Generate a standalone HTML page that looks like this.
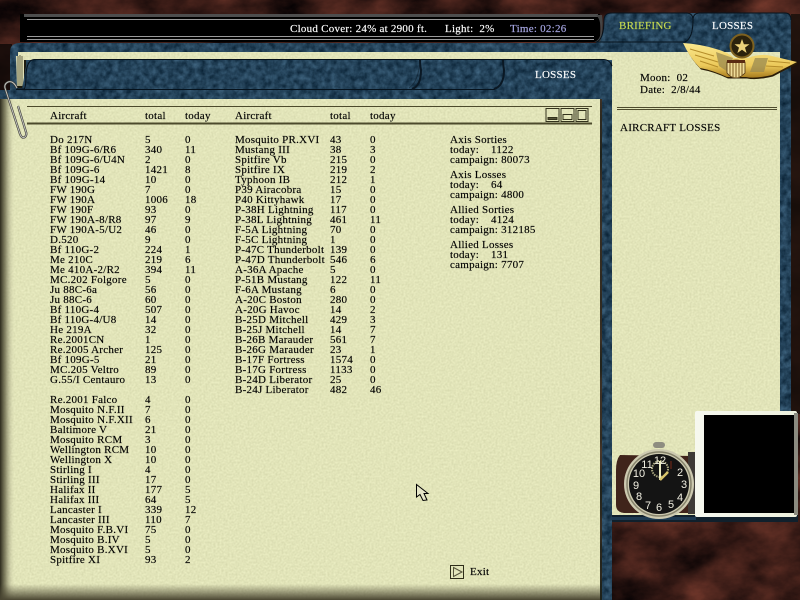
<!DOCTYPE html>
<html><head><meta charset="utf-8"><style>
html,body{margin:0;padding:0;width:800px;height:600px;overflow:hidden;background:#2a150f}
.t{position:absolute;font:11px/10px "Liberation Serif",serif;color:#000;white-space:pre;letter-spacing:.25px;-webkit-text-stroke:.15px currentColor}
svg{position:absolute;left:0;top:0}
</style></head><body>
<svg width="800" height="600" viewBox="0 0 800 600">
<defs>
<filter id="blue" x="0" y="0" width="100%" height="100%" color-interpolation-filters="sRGB">
<feTurbulence type="fractalNoise" baseFrequency="0.16" numOctaves="3" seed="4"/>
<feColorMatrix values="0.26 0 0 0 0.01  0.32 0 0 0 0.10  0.36 0 0 0 0.17  0 0 0 0 1"/>
<feComposite in2="SourceAlpha" operator="in"/>
</filter>
<filter id="brown" x="0" y="0" width="100%" height="100%" color-interpolation-filters="sRGB">
<feTurbulence type="fractalNoise" baseFrequency="0.016 0.026" numOctaves="7" seed="9"/>
<feColorMatrix values="0.62 0 0 0 -0.09  0.31 0 0 0 -0.05  0.23 0 0 0 -0.03  0 0 0 0 1"/>
<feComposite in2="SourceAlpha" operator="in"/>
</filter>
<filter id="paper" x="0" y="0" width="100%" height="100%" color-interpolation-filters="sRGB">
<feTurbulence type="fractalNoise" baseFrequency="0.5" numOctaves="2" seed="2"/>
<feColorMatrix values="0.12 0 0 0 0.825  0.12 0 0 0 0.835  0.12 0 0 0 0.665  0 0 0 0 1"/>
<feComposite in2="SourceAlpha" operator="in"/>
</filter>
<linearGradient id="lsh" x1="0" x2="1" y1="0" y2="0"><stop offset="0" stop-color="#2c2a1c"/><stop offset=".35" stop-color="#6e6c50" stop-opacity=".8"/><stop offset="1" stop-color="#e2e2bc" stop-opacity="0"/></linearGradient>
<linearGradient id="bsh" x1="0" x2="0" y1="0" y2="1"><stop offset="0" stop-color="#55513a" stop-opacity="0"/><stop offset="1" stop-color="#4a4632"/></linearGradient>
<linearGradient id="gold" x1="0" x2="0" y1="0" y2="1"><stop offset="0" stop-color="#fbe98e"/><stop offset=".65" stop-color="#ecc95a"/><stop offset="1" stop-color="#a87c1e"/></linearGradient>
<linearGradient id="mon" x1="0" x2="1" y1="0" y2="0"><stop offset="0" stop-color="#f6f8ef"/><stop offset="1" stop-color="#eef0dd"/></linearGradient>
</defs>
<rect width="800" height="600" fill="#000" filter="url(#brown)"/>
<rect x="0" y="44" width="12" height="46" fill="#0c0806" opacity=".8"/>
<rect x="791" y="14" width="9" height="400" fill="#1b100c" opacity=".85"/>
<path filter="url(#blue)" fill="#000" d="M10 52Q10 43 20 43H596Q604 40 604 20Q604 13 612 13H785Q791 13 791 20V412H780V52H612V600H602V99H0V90H10Z"/>
<rect x="612" y="52" width="168" height="465" fill="#000" filter="url(#paper)"/>
<rect x="612" y="515" width="186" height="7" fill="#10202c"/>
<rect x="612" y="517" width="84" height="3" fill="#1d3a52"/>
<rect x="18" y="52" width="594" height="8" fill="#000" filter="url(#paper)"/>
<path d="M16 56H22L25 60V88H17Z" fill="#e0dfb6"/>
<path d="M18 56V87M20 55V87M22 56V87" stroke="#4c4a30" stroke-width=".8" fill="none"/>
<path d="M24 60H26V88H16V86H24Z" fill="#1b1a10"/>
<path filter="url(#blue)" fill="#000" d="M25 72Q26 60 34 60H604Q612 60 612 68V99H16V89H22Z"/>
<path d="M17 89H24Q26 88 26 74Q27 60 34 59.500H604Q610 60 612 66" fill="none" stroke="#05101a" stroke-width="1"/>
<path d="M16 89.500H495" stroke="#06121c" stroke-width="1"/>
<path d="M420 60Q420 64 421 70Q421 86 412 89" fill="none" stroke="#0a1824" stroke-width="2"/>
<path d="M503 60Q503 64 504 70Q504 86 494 89" fill="none" stroke="#0a1824" stroke-width="2"/>
<path d="M420 62Q418 82 409 88" fill="none" stroke="#0a1824" stroke-width="1" opacity=".5"/>
<rect x="0" y="99" width="600" height="501" fill="#000" filter="url(#paper)"/>
<rect x="0" y="99" width="15" height="501" fill="url(#lsh)"/>
<rect x="0" y="584" width="600" height="16" fill="url(#bsh)"/>
<rect x="600" y="99" width="2" height="501" fill="#2e3a2c" opacity=".55"/>
<rect x="20" y="14" width="580" height="28" fill="#000"/>
<rect x="24" y="14" width="574" height="3" fill="#4e4e4e"/>
<path d="M27 19.500H594M27 36.500H594M27 39.500H594" stroke="#9a9a9a" stroke-width="1"/>
<path d="M596 15Q602 20 600 36Q598 41 594 42H600Q604 30 602 15Z" fill="#444"/>
<path d="M596 42Q604 40 604 20Q604 13 612 13H686Q693 13 693 20Q693 38 685 42Z" fill="none" stroke="#07131d" stroke-width="1"/>
<path d="M693 20Q693 13 700 13H785Q791 13 791 20" fill="none" stroke="#07131d" stroke-width="1"/>
<path d="M27 106.500H592" stroke="#4c4a2c" stroke-width="1"/>
<path d="M27 123.500H592" stroke="#4c4a2c" stroke-width="2"/>
<path d="M617 107.500H777M617 109.500H777" stroke="#4c4a2c" stroke-width="1"/>
<g fill="none" stroke="#33321c" stroke-width="1">
<rect x="546" y="108.500" width="13" height="13"/><rect x="561" y="108.500" width="13" height="13"/><rect x="576" y="108.500" width="12" height="13"/>
<rect x="548" y="117.500" width="9" height="2" fill="#555338"/><rect x="563" y="114.500" width="9" height="5"/><rect x="578" y="110.500" width="8" height="9"/>
</g>
<path d="M17 88Q13 80 8 82Q4 84 5 88L20 134Q22 139 25 137Q27 135 26 132L18 106" fill="none" stroke="#3a3a34" stroke-width="2.200"/>
<path d="M17 88Q13 80 8 82Q4 84 5 88L20 134Q22 139 25 137Q27 135 26 132L18 106" fill="none" stroke="#c4c4c0" stroke-width="1"/>
<path d="M683 43Q700 44 716 49Q728 52 734 58L748 58Q760 53 772 56L797 62Q785 68 772 75Q755 79 746 77L727 77Q712 70 700 68Q690 58 683 43Z" fill="#2a1c06" transform="translate(1,1.500)"/>
<path d="M683 43Q700 44 716 49Q728 52 734 58L748 58Q760 53 772 56L797 62Q785 68 772 75Q755 79 746 77L727 77Q712 70 700 68Q690 58 683 43Z" fill="url(#gold)"/>
<path d="M690 49L714 56M695 55L718 62M700 61L718 67M790 63L768 61M783 67L766 66" stroke="#b58d2a" stroke-width="1"/>
<path d="M716 52L733 58L728 72L719 66Z M755 58L768 58L764 72L750 72Z" fill="#9a8a50" opacity=".75"/>
<path d="M727 62Q736 58 745 62V73Q740 78 736 78Q731 78 727 73Z" fill="#efdc98" stroke="#4a3010" stroke-width=".8"/>
<rect x="727" y="60" width="18" height="3" fill="#5a2a12"/>
<path d="M730 63V76M733 63V78M736 63V78M739 63V78M742 63V76" stroke="#7c5a20" stroke-width="1"/>
<circle cx="742" cy="46" r="11.500" fill="#2b220c" stroke="#7d6120" stroke-width="2"/>
<path d="M742 39L743.900 44.300H749.500L745 47.600L746.600 53L742 49.800L737.400 53L739 47.600L734.500 44.300H740.100Z" fill="#ecd27a"/>
<rect x="695" y="411" width="102" height="106" rx="2" fill="url(#mon)"/>
<rect x="704" y="415" width="90" height="98" fill="#000"/>
<rect x="794" y="413" width="4" height="102" fill="#8b8b80"/>
<path d="M620 455Q616 460 616 470V505Q616 512 624 513H694V456Z" fill="#40241b"/>
<rect x="688" y="452" width="7" height="62" fill="#3e3a36"/>
<rect x="653" y="442" width="12" height="6" rx="3" fill="#8e8d80"/>
<circle cx="659" cy="484" r="35" fill="#cdcab0"/>
<circle cx="659" cy="484" r="32" fill="none" stroke="#86836c" stroke-width="1.500"/>
<circle cx="659" cy="484" r="30" fill="#141414"/>
<circle cx="660" cy="469" r="8" fill="none" stroke="#aaa77f" stroke-width="2" stroke-dasharray="1.500 1"/>
<g font-family="Liberation Sans,sans-serif" font-size="11" fill="#f2f0e2" text-anchor="middle">
<text x="660" y="464">12</text><text x="680" y="476">2</text><text x="684" y="488">3</text><text x="680" y="501">4</text><text x="671" y="508">5</text><text x="659" y="511">6</text><text x="648" y="509">7</text><text x="639" y="500">8</text><text x="636" y="489">9</text><text x="639" y="477">10</text><text x="647" y="468">11</text>
</g>
<path d="M660 480V461" stroke="#ecebc0" stroke-width="2"/>
<path d="M660 480L668 472" stroke="#d9c46a" stroke-width="2.500"/>
<path d="M671 461V469" stroke="#7a2a18" stroke-width="1"/>
<path d="M416.500 484.500V497L420 494.500L423 500.500L427 500L424 493.500H428Z" fill="#e6e6c8" stroke="#000" stroke-width="1"/>
<rect x="450.500" y="565.500" width="13" height="13" fill="none" stroke="#2e2d18" stroke-width="1"/>
<path d="M453.500 567.500L462 572L453.500 576.500Z" fill="none" stroke="#55533a" stroke-width="1"/>
</svg>

<div class="t" style="left:290px;top:24px;color:#fff">Cloud Cover: 24% at 2900 ft.</div>
<div class="t" style="left:445px;top:24px;color:#fff">Light:  2%</div>
<div class="t" style="left:510px;top:24px;color:#a9a9e6">Time: 02:26</div>
<div class="t" style="left:619px;top:21px;color:#c8dc50">BRIEFING</div>
<div class="t" style="left:712px;top:21px;color:#fff">LOSSES</div>
<div class="t" style="left:535px;top:70px;color:#fff">LOSSES</div>
<div class="t" style="left:640px;top:73px">Moon:  02</div>
<div class="t" style="left:640px;top:85px">Date:  2/8/44</div>
<div class="t" style="left:620px;top:123px">AIRCRAFT LOSSES</div>

<div class="t" style="left:50px;top:111px">Aircraft</div>
<div class="t" style="left:145px;top:111px">total</div>
<div class="t" style="left:185px;top:111px">today</div>
<div class="t" style="left:235px;top:111px">Aircraft</div>
<div class="t" style="left:330px;top:111px">total</div>
<div class="t" style="left:370px;top:111px">today</div>

<div class="t" style="left:50px;top:135px">Do 217N
Bf 109G-6/R6
Bf 109G-6/U4N
Bf 109G-6
Bf 109G-14
FW 190G
FW 190A
FW 190F
FW 190A-8/R8
FW 190A-5/U2
D.520
Bf 110G-2
Me 210C
Me 410A-2/R2
MC.202 Folgore
Ju 88C-6a
Ju 88C-6
Bf 110G-4
Bf 110G-4/U8
He 219A
Re.2001CN
Re.2005 Archer
Bf 109G-5
MC.205 Veltro
G.55/I Centauro

Re.2001 Falco
Mosquito N.F.II
Mosquito N.F.XII
Baltimore V
Mosquito RCM
Wellington RCM
Wellington X
Stirling I
Stirling III
Halifax II
Halifax III
Lancaster I
Lancaster III
Mosquito F.B.VI
Mosquito B.IV
Mosquito B.XVI
Spitfire XI</div>
<div class="t" style="left:145px;top:135px">5
340
2
1421
10
7
1006
93
97
46
9
224
219
394
5
56
60
507
14
32
1
125
21
89
13

4
7
6
21
3
10
10
4
17
177
64
339
110
75
5
5
93</div>
<div class="t" style="left:185px;top:135px">0
11
0
8
0
0
18
0
9
0
0
1
6
11
0
0
0
0
0
0
0
0
0
0
0

0
0
0
0
0
0
0
0
0
5
5
12
7
0
0
0
2</div>

<div class="t" style="left:235px;top:135px">Mosquito PR.XVI
Mustang III
Spitfire Vb
Spitfire IX
Typhoon IB
P39 Airacobra
P40 Kittyhawk
P-38H Lightning
P-38L Lightning
F-5A Lightning
F-5C Lightning
P-47C Thunderbolt
P-47D Thunderbolt
A-36A Apache
P-51B Mustang
F-6A Mustang
A-20C Boston
A-20G Havoc
B-25D Mitchell
B-25J Mitchell
B-26B Marauder
B-26G Marauder
B-17F Fortress
B-17G Fortress
B-24D Liberator
B-24J Liberator</div>
<div class="t" style="left:330px;top:135px">43
38
215
219
212
15
17
117
461
70
1
139
546
5
122
6
280
14
429
14
561
23
1574
1133
25
482</div>
<div class="t" style="left:370px;top:135px">0
3
0
2
1
0
0
0
11
0
0
0
6
0
11
0
0
2
3
7
7
1
0
0
0
46</div>

<div class="t" style="left:450px;top:135px">Axis Sorties
today:    1122
campaign: 80073</div>
<div class="t" style="left:450px;top:170px">Axis Losses
today:    64
campaign: 4800</div>
<div class="t" style="left:450px;top:205px">Allied Sorties
today:    4124
campaign: 312185</div>
<div class="t" style="left:450px;top:240px">Allied Losses
today:    131
campaign: 7707</div>
<div class="t" style="left:470px;top:567px">Exit</div>
</body></html>
